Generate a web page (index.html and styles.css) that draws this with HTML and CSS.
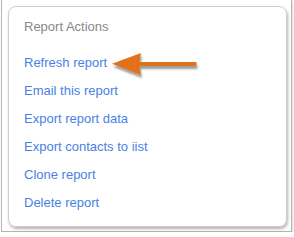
FILE: index.html
```html
<!DOCTYPE html>
<html>
<head>
<meta charset="utf-8">
<link rel="stylesheet" href="styles.css">
</head>
<body>
<div class="frame">
  <div class="card">
    <div class="title">Report Actions</div>
    <ul class="actions">
      <li><a href="#">Refresh report</a></li>
      <li><a href="#">Email this report</a></li>
      <li><a href="#">Export report data</a></li>
      <li><a href="#">Export contacts to iist</a></li>
      <li><a href="#">Clone report</a></li>
      <li><a href="#">Delete report</a></li>
    </ul>
    <svg class="arrow" width="95" height="36" viewBox="0 0 95 36">
      <defs>
        <filter id="sh" x="-20%" y="-30%" width="140%" height="170%">
          <feDropShadow dx="1" dy="3" stdDeviation="1.2" flood-color="#000" flood-opacity="0.4"/>
        </filter>
      </defs>
      <polygon filter="url(#sh)" fill="#e4701f" points="4,15.8 33,5 31.5,14 88.5,14 88.5,18 31.5,18 33,27"/>
    </svg>
  </div>
</div>
</body>
</html>
```
FILE: styles.css
```css
html, body {
  margin: 0;
  padding: 0;
  background: #fff;
}
body {
  font-family: "Liberation Sans", Arial, sans-serif;
  font-size: 13px;
}
.frame {
  margin-left: 1px;
  width: 289px;
  height: 231px;
  border: 1px solid #b4b4b4;
  border-top: none;
  box-shadow: 1px 1px 2px rgba(0,0,0,0.15);
  padding-top: 6px;
  padding-left: 6px;
  box-sizing: content-box;
}
.frame {
  width: 283px;
  height: 225px;
}
.card {
  position: relative;
  box-sizing: border-box;
  width: 279px;
  height: 221px;
  border: 1px solid #cfcfcf;
  border-radius: 8px;
  box-shadow: 1px 2px 3px rgba(0,0,0,0.3);
  padding: 12px 15px;
}
.title {
  color: #888;
  line-height: 15px;
  margin-bottom: 21px;
}
.actions {
  list-style: none;
  margin: 0;
  padding: 0;
  display: flex;
  flex-direction: column;
  gap: 13px;
}
.actions li {
  line-height: 15px;
}
.actions a {
  color: #4a80e6;
  text-decoration: none;
}
.arrow {
  position: absolute;
  left: 99px;
  top: 41px;
}
```
